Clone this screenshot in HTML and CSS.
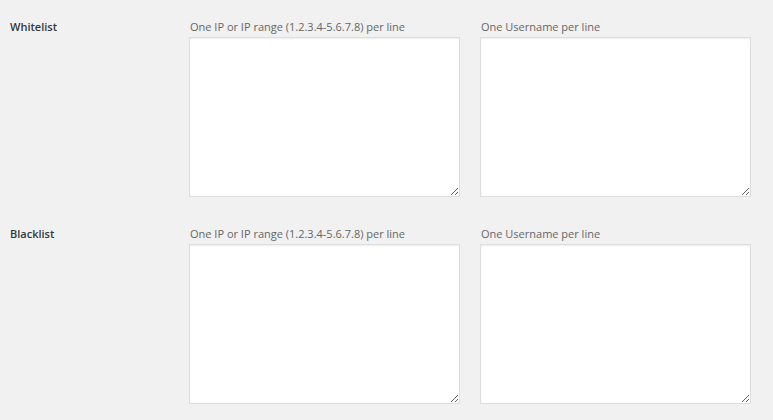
FILE: index.html
```html
<!DOCTYPE html>
<html>
<head>
<meta charset="utf-8">
<link rel="stylesheet" href="styles.css">
</head>
<body>
<div class="settings">
  <div class="row">
    <div class="label">Whitelist</div>
    <div class="fields">
      <div class="field">
        <div class="desc">One IP or IP range (1.2.3.4-5.6.7.8) per line</div>
        <textarea class="box"></textarea>
      </div>
      <div class="field">
        <div class="desc">One Username per line</div>
        <textarea class="box"></textarea>
      </div>
    </div>
  </div>
  <div class="row">
    <div class="label">Blacklist</div>
    <div class="fields">
      <div class="field">
        <div class="desc">One IP or IP range (1.2.3.4-5.6.7.8) per line</div>
        <textarea class="box"></textarea>
      </div>
      <div class="field">
        <div class="desc">One Username per line</div>
        <textarea class="box"></textarea>
      </div>
    </div>
  </div>
</div>
</body>
</html>
```
FILE: styles.css
```css
html, body {
  margin: 0;
  padding: 0;
  background: #f1f1f1;
}
body {
  font-family: "Open Sans", "Noto Sans", sans-serif;
  font-size: 11px;
  color: #23282d;
  width: 773px;
  height: 420px;
  overflow: hidden;
}
.row {
  display: flex;
  padding: 18px 0 10px;
}
.label {
  width: 179px;
  padding-left: 10px;
  font-weight: 600;
  font-size: 11px;
  line-height: 18px;
  color: #32373c;
}
.fields {
  display: flex;
  gap: 20px;
}
.field {
  width: 271px;
  display: flex;
  flex-direction: column;
}
.desc {
  font-size: 11px;
  line-height: 18px;
  color: #666;
  padding-left: 1px;
  margin-bottom: 1px;
  white-space: nowrap;
}
.box {
  box-sizing: border-box;
  width: 271px;
  height: 160px;
  margin: 0;
  border: 1px solid #ddd;
  background: #fff;
  box-shadow: inset 0 1px 2px rgba(0, 0, 0, 0.07);
  resize: both;
  display: block;
}
```
